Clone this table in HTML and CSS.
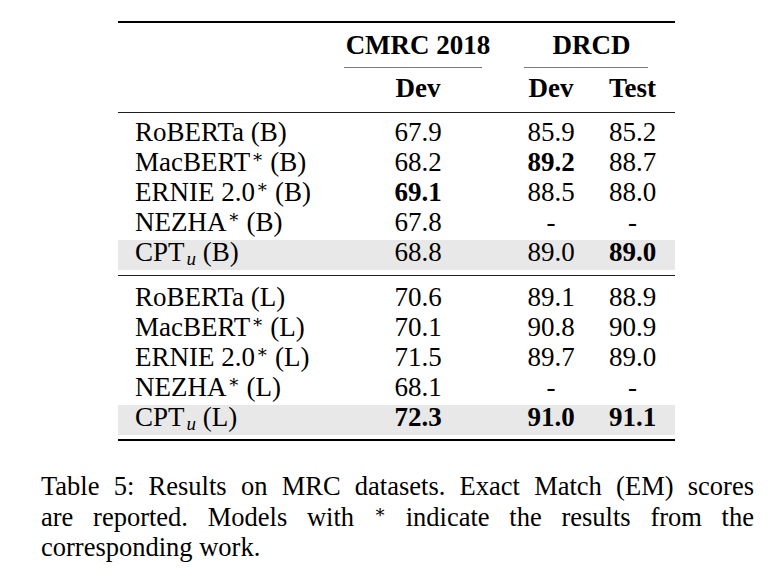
FILE: index.html
```html
<!DOCTYPE html>
<html lang="en">
<head>
<meta charset="utf-8">
<title>Table 5: Results on MRC datasets</title>
<link rel="stylesheet" href="styles.css">
</head>
<body>
<div class="page">
  <div class="results">
    <div class="rule rule-top"></div>
    <div class="row head head-1">
      <div class="cell"></div>
      <div class="cell c">CMRC 2018</div>
      <div class="cell c span2 drcd">DRCD</div>
    </div>
    <div class="row cmid">
      <div></div>
      <div class="cmidrule cm-cmrc"></div>
      <div class="cmidrule cm-drcd span2"></div>
    </div>
    <div class="row head head-2">
      <div class="cell"></div>
      <div class="cell c">Dev</div>
      <div class="cell c">Dev</div>
      <div class="cell c">Test</div>
    </div>
    <div class="rule rule-mid rule-head"></div>

    <div class="block block-1">
      <div class="row"><div class="cell name">RoBERTa (B)</div><div class="cell c">67.9</div><div class="cell c">85.9</div><div class="cell c">85.2</div></div>
      <div class="row"><div class="cell name">MacBERT<span class="star">∗</span> (B)</div><div class="cell c">68.2</div><div class="cell c b">89.2</div><div class="cell c">88.7</div></div>
      <div class="row"><div class="cell name">ERNIE 2.0<span class="star">∗</span> (B)</div><div class="cell c b">69.1</div><div class="cell c">88.5</div><div class="cell c">88.0</div></div>
      <div class="row"><div class="cell name">NEZHA<span class="star">∗</span> (B)</div><div class="cell c">67.8</div><div class="cell c">-</div><div class="cell c">-</div></div>
      <div class="row hl"><div class="cell name">CPT<span class="sub">u</span> (B)</div><div class="cell c">68.8</div><div class="cell c">89.0</div><div class="cell c b">89.0</div></div>
    </div>

    <div class="rule rule-mid rule-split"></div>

    <div class="block block-2">
      <div class="row"><div class="cell name">RoBERTa (L)</div><div class="cell c">70.6</div><div class="cell c">89.1</div><div class="cell c">88.9</div></div>
      <div class="row"><div class="cell name">MacBERT<span class="star">∗</span> (L)</div><div class="cell c">70.1</div><div class="cell c">90.8</div><div class="cell c">90.9</div></div>
      <div class="row"><div class="cell name">ERNIE 2.0<span class="star">∗</span> (L)</div><div class="cell c">71.5</div><div class="cell c">89.7</div><div class="cell c">89.0</div></div>
      <div class="row"><div class="cell name">NEZHA<span class="star">∗</span> (L)</div><div class="cell c">68.1</div><div class="cell c">-</div><div class="cell c">-</div></div>
      <div class="row hl"><div class="cell name">CPT<span class="sub">u</span> (L)</div><div class="cell c b">72.3</div><div class="cell c b">91.0</div><div class="cell c b">91.1</div></div>
    </div>

    <div class="rule rule-bottom"></div>
  </div>

  <div class="caption">
    <div class="line just">Table 5: Results on MRC datasets. Exact Match (EM) scores</div>
    <div class="line just">are reported. Models with <span class="cap-star">∗</span> indicate the results from the</div>
    <div class="line">corresponding work.</div>
  </div>
</div>
</body>
</html>
```

FILE: styles.css
```css
html, body {
  margin: 0;
  background: #ffffff;
}

.page {
  padding-top: 21px;
  font-family: "Liberation Serif", "Times New Roman", serif;
  color: #000000;
}

.results {
  margin-left: 118px;
  width: 557px;
}

.row {
  display: grid;
  grid-template-columns: 206px 188px 78px 85px;
}

.cell {
  font-size: 27px;
  line-height: 24px;
  padding-bottom: 6px;
  white-space: nowrap;
}

.head .cell {
  font-weight: bold;
}

.name {
  padding-left: 17px;
}

.c {
  text-align: center;
}

.b {
  font-weight: bold;
}

.span2 {
  grid-column: span 2;
}

.drcd {
  padding-right: 4px;
}

.rule {
  background: #000000;
}

.rule-top {
  height: 2px;
  margin-bottom: 10px;
}

.cmid {
  margin-top: 4px;
  height: 1px;
}

.cmidrule {
  height: 1px;
  background: #7a7a7a;
}

.cm-cmrc {
  margin: 0 30px 0 20px;
}

.cm-drcd {
  margin: 0 27px 0 12px;
}

.head-2 {
  margin-top: 8px;
}

.rule-mid {
  height: 1px;
  background: #1e1e1e;
}

.rule-head {
  margin-top: 6px;
}

.block-1 {
  margin-top: 7px;
}

.rule-split {
  margin-top: 5px;
}

.block-2 {
  margin-top: 9px;
}

.hl {
  background: #e8e8e8;
}

.rule-bottom {
  height: 2px;
  margin-top: 4px;
}

.star {
  font-family: "DejaVu Serif", "Liberation Serif", serif;
  font-size: 18px;
  vertical-align: 8px;
  line-height: 0;
  margin-left: 1px;
}

.sub {
  font-style: italic;
  font-size: 19px;
  vertical-align: -4px;
  line-height: 0;
  margin-left: 2px;
}

.caption {
  margin-top: 30px;
  margin-left: 41px;
  width: 713px;
  font-size: 26.5px;
  line-height: 30.5px;
}

.line {
  white-space: nowrap;
}

.just {
  text-align: justify;
  text-align-last: justify;
  white-space: normal;
}

.cap-star {
  font-family: "DejaVu Serif", "Liberation Serif", serif;
  font-size: 18px;
  vertical-align: 8px;
  line-height: 0;
}
```
